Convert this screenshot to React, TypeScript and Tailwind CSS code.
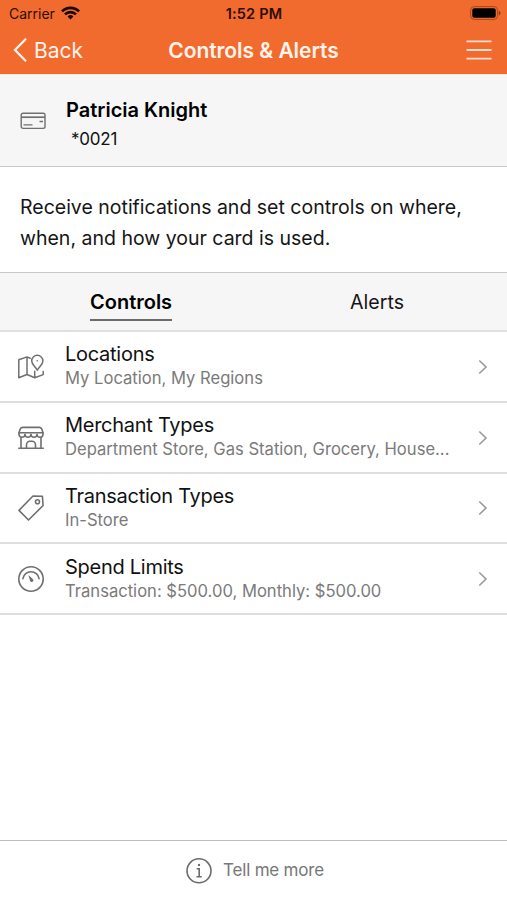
import type { ReactNode } from 'react';

function CardIcon() {
    return (
        <svg width="26" height="18" viewBox="0 0 26 18" fill="none" stroke="#707070" strokeWidth="1.4">
            <rect x="1.2" y="1.2" width="23.8" height="15.2" rx="1.8" />
            <path d="M1 5.2h24" strokeWidth="1.7" />
            <path d="M3.5 12.9h9M19.5 9.5h3.5" />
        </svg>
    );
}

function MapIcon() {
    return (
        <svg width="28" height="28" viewBox="0 0 28 28" fill="none" stroke="#6f6f6f" strokeWidth="1.5" strokeLinejoin="round" strokeLinecap="round">
            <path d="M13.2 5.2 L10 3.9 L1.8 6.8 V24.7 L10 21.5 L17.7 24.7 L26.2 21.6 V18.6 M10 3.9 V21.5 M17.7 24.7 V18.2" />
            <path d="M20.3 17.2 C18.6 13.6 14.7 11.6 14.7 7.9 A5.6 5.6 0 0 1 25.9 7.9 C25.9 11.6 22 13.6 20.3 17.2Z" />
            <circle cx="20.3" cy="7.7" r="0.8" fill="#6f6f6f" stroke="none" />
        </svg>
    );
}

function StoreIcon() {
    return (
        <svg width="28" height="28" viewBox="0 0 28 28" fill="none" stroke="#6f6f6f" strokeWidth="1.6" strokeLinejoin="round" strokeLinecap="round">
            <path d="M5.5 3.4H22.5C24 3.4 24.6 4.2 25 5.6L26 8.8H2L3 5.6C3.4 4.2 4 3.4 5.5 3.4Z" />
            <path d="M2 8.8V10.3A3 3 0 0 0 8 10.3A3 3 0 0 0 14 10.3A3 3 0 0 0 20 10.3A3 3 0 0 0 26 10.3V8.8" />
            <path d="M4 13.5V24.3M24 13.5V24.3M1.8 24.3H26.2M9.5 24.3V20.7A3.5 3.5 0 0 1 13 17.2H15A3.5 3.5 0 0 1 18.5 20.7V24.3" />
        </svg>
    );
}

function TagIcon() {
    return (
        <svg width="28" height="28" viewBox="0 0 28 28" fill="none" stroke="#6f6f6f" strokeWidth="1.6" strokeLinejoin="round">
            <path d="M16 2 L25.4 2.3 L26.1 11.5 L11.5 26 L2 16.4Z" />
            <circle cx="20.5" cy="7.7" r="2" />
        </svg>
    );
}

function GaugeIcon() {
    return (
        <svg width="28" height="28" viewBox="0 0 28 28" fill="none" stroke="#6f6f6f" strokeWidth="1.6" strokeLinecap="round">
            <circle cx="14" cy="14" r="12.2" />
            <path d="M5.9 13.6A8.2 8.2 0 0 1 22.1 13.6" />
            <path d="M11.4 10L16 14.2A1.7 1.7 0 0 1 13.2 16.3Z" fill="#6f6f6f" stroke="none" />
        </svg>
    );
}

function Chevron() {
    return (
        <svg width="10" height="16" viewBox="0 0 10 16" fill="none" stroke="#999" strokeWidth="1.6">
            <path d="M1.3 1.5L8 8L1.3 14.5" />
        </svg>
    );
}

function Row({ icon, title, detail }: { icon: ReactNode; title: string; detail: string }) {
    return (
        <div className="flex h-[70.75px] items-center border-b-2 border-[#dedede] pt-px pr-[19px] pl-[17px]">
            {icon}
            <div className="-mt-[3px] ml-5 min-w-0 flex-1 whitespace-nowrap">
                <div className="text-[20px] leading-[26px] tracking-[-0.27px] text-[#111]">{title}</div>
                <div className="text-[16.6px] leading-[22px] text-[#7a7a7a]">{detail}</div>
            </div>
            <Chevron />
        </div>
    );
}

export default function App() {
    return (
        <div className="flex h-[900px] w-[507px] flex-col overflow-hidden bg-white font-['Inter',sans-serif] text-black">
            {/* Status bar and navigation */}
            <header className="h-[74px] shrink-0 bg-[#f16b2f]">
                <div className="grid h-[27px] grid-cols-3 items-center pr-[6px] pl-[9px] text-[14px] text-[#2c0d02]">
                    <div className="flex items-center gap-[6px]">
                        <span>Carrier</span>
                        <svg className="-mt-[2px]" width="19" height="14" viewBox="0 0 19 14" fill="none" stroke="#1a0700" strokeWidth="2.7">
                            <path d="M1 5.4A12 12 0 0 1 18 5.4M4 8.4A7.8 7.8 0 0 1 15 8.4" />
                            <path d="M9.5 13.5L6.6 10.5A4.1 4.1 0 0 1 12.4 10.5Z" fill="#1a0700" stroke="none" />
                        </svg>
                    </div>
                    <span className="pr-[2px] text-center text-[14.5px] font-semibold tracking-[0.2px]">1:52 PM</span>
                    <svg className="-mt-px justify-self-end" width="31" height="14" viewBox="0 0 31 14">
                        <rect x="0.6" y="0.6" width="27" height="12.8" rx="3.6" fill="none" stroke="#a6481c" />
                        <rect x="2.3" y="2.3" width="23.4" height="9.4" rx="2" fill="#000" />
                        <path d="M28.8 4.7C31 5.5 31 8.5 28.8 9.3Z" fill="#8a3812" />
                    </svg>
                </div>
                <div className="grid h-[45px] grid-cols-[100px_1fr_100px] items-center text-[#fff3ec]">
                    <div className="flex items-center gap-[7px] pl-[13px] text-[21px]">
                        <svg width="14" height="26" viewBox="0 0 14 26" fill="none" stroke="#fff3ec" strokeWidth="2.3">
                            <path d="M13 1.8L2 13L13 24.2" />
                        </svg>
                        <span className="pt-[2px]">Back</span>
                    </div>
                    <h1 className="pt-[2px] text-center text-[21px] font-semibold tracking-[-0.05px]">Controls &amp; Alerts</h1>
                    <svg className="mr-[15px] justify-self-end" width="26" height="20" viewBox="0 0 26 20" stroke="#ffe0d0" strokeWidth="1.8">
                        <path d="M0.5 1.3H25.5M0.5 10H25.5M0.5 18.7H25.5" />
                    </svg>
                </div>
            </header>

            {/* Account */}
            <section className="flex h-[93px] shrink-0 items-center border-t border-b border-t-[#fbe9df] border-b-[#c9c9c9] bg-[#f6f6f6] pl-[20px]">
                <CardIcon />
                <div className="ml-5 pt-[6px]">
                    <div className="text-[20px] leading-[30px] font-semibold">Patricia Knight</div>
                    <div className="pl-[5px] text-[17px] leading-[28px] tracking-[-0.2px] text-[#111]">*0021</div>
                </div>
            </section>

            <p className="h-[106px] shrink-0 border-b border-[#c9c9c9] pt-[25px] pl-[20px] text-[19.5px] leading-[31px] text-[#151515]">
                Receive notifications and set controls on where,
                <br />
                when, and how your card is used.
            </p>

            {/* Tabs */}
            <div className="flex h-[59px] shrink-0 justify-between border-b-2 border-[#e0e0e0] bg-[#f6f6f6] pt-[14px] pr-[103px] pl-[90px] text-[20px] leading-[30px]">
                <span className="h-[34px] border-b-2 border-[#6b6b6b] font-semibold">Controls</span>
                <span className="text-[19.6px] text-[#151515]">Alerts</span>
            </div>

            <div className="flex-1">
                <Row icon={<MapIcon />} title="Locations" detail="My Location, My Regions" />
                <Row icon={<StoreIcon />} title="Merchant Types" detail="Department Store, Gas Station, Grocery, House..." />
                <Row icon={<TagIcon />} title="Transaction Types" detail="In-Store" />
                <Row icon={<GaugeIcon />} title="Spend Limits" detail="Transaction: $500.00, Monthly: $500.00" />
            </div>

            <footer className="flex h-[60px] shrink-0 items-center justify-center gap-[11px] border-t border-[#bdbdbd] pl-[3px] text-[17px] text-[#777]">
                <svg width="26" height="26" viewBox="0 0 26 26" fill="none" stroke="#6b6b6b" strokeWidth="1.6">
                    <circle cx="13" cy="12.8" r="12" />
                    <path d="M10.7 10.7H13.2V18.7M10.5 18.7H15.7" />
                    <circle cx="13" cy="6.9" r="1.2" fill="#6b6b6b" stroke="none" />
                </svg>
                <span className="tracking-[-0.2px]">Tell me more</span>
            </footer>
        </div>
    );
}
